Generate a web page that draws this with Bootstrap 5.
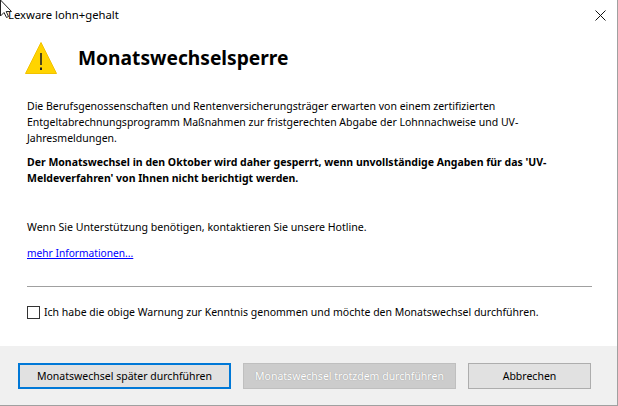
<!DOCTYPE html>
<html lang="de">
<head>
  <meta charset="UTF-8">
  <title>Lexware lohn+gehalt</title>
  <link href="https://cdn.jsdelivr.net/npm/bootstrap@5.3.0/dist/css/bootstrap.min.css" rel="stylesheet">
  <style>
    html, body { height: 100%; }
    body {
      margin: 0;
      background: #fff;
      color: #000;
      font-family: "Noto Sans", "Open Sans", sans-serif;
      font-size: 10.5px;
      line-height: 16px;
    }
    .dlg-window {
      width: 618px;
      height: 406px;
      border-right: 1px solid #a0a0a0;
      border-bottom: 1px solid #a0a0a0;
      position: relative;
      overflow: hidden;
    }
    .dlg-cursor { position: absolute; left: 0; top: 0; }
    .dlg-title { height: 30px; padding-left: 8px; font-size: 11.3px; }
    .dlg-close { width: 15px; height: 15px; margin-right: 9px; }
    .dlg-head { height: 56px; padding-left: 25px; gap: 21px; }
    .dlg-head h1 { font-size: 19.2px; font-weight: 700; margin: 0; line-height: 26px; }
    .dlg-body { padding: 12px 25px 0 27px; flex: 1 1 auto; }
    .dlg-body p { margin: 0; }
    .dlg-body .dlg-intro { height: 48px; }
    .dlg-body .dlg-warn { height: 32px; margin-top: 8px; font-weight: 700; }
    .dlg-body .dlg-hotline { margin-top: 33px; font-size: 10.6px; }
    .dlg-body .dlg-more { margin-top: 10px; font-size: 10.2px; }
    .dlg-more a { color: #0000ff; }
    .dlg-rule { margin: 25px 0 0; border: 0; border-top: 1px solid #a0a0a0; opacity: 1; }
    .dlg-check { margin-top: 17px; gap: 4px; }
    .dlg-box { width: 13px; height: 13px; border: 1px solid #333; background: #fff; }
    .dlg-foot { height: 59px; background: #f0f0f0; padding: 17px 26px 0 18px; gap: 12px; }
    .dlg-btn {
      height: 26px;
      padding: 0;
      background: #e1e1e1;
      border: 1px solid #adadad;
      border-radius: 0;
      color: #000;
      font-size: 10.5px;
      line-height: 1;
    }
    .dlg-btn:disabled { background: #cccccc; border-color: #bfbfbf; color: #fff; opacity: 1; text-shadow: 0 0 1px #8a8a8a; }
    .dlg-btn-main { width: 213px; border: 2px solid #0078d7; }
    .dlg-btn-alt { width: 213px; }
    .dlg-btn-esc { width: 123px; }
  </style>
</head>
<body>
  <div class="dlg-window d-flex flex-column">
    <!-- title bar -->
    <div class="dlg-title d-flex align-items-center justify-content-between">
      <span>Lexware lohn+gehalt</span>
      <svg class="dlg-close" viewBox="0 0 15 15"><path d="M2.5 2.5 L12.5 12.5 M12.5 2.5 L2.5 12.5" stroke="#111" stroke-width="1" fill="none"/></svg>
    </div>

    <!-- heading -->
    <div class="dlg-head d-flex align-items-center">
      <svg width="32" height="32" viewBox="0 0 32 32">
        <path d="M16 .5 L31.5 31.5 L.5 31.5 Z" fill="#ffd400" stroke="#f2c200" stroke-width="1"/>
        <path d="M16 11 V23" stroke="#222" stroke-width="1.6"/>
        <rect x="15" y="25.5" width="2" height="2.5" fill="#222"/>
      </svg>
      <h1>Monatswechselsperre</h1>
    </div>

    <!-- text -->
    <div class="dlg-body">
      <p class="dlg-intro">Die Berufsgenossenschaften und Rentenversicherungsträger erwarten von einem zertifizierten<br>Entgeltabrechnungsprogramm Maßnahmen zur fristgerechten Abgabe der Lohnnachweise und UV-<br>Jahresmeldungen.</p>
      <p class="dlg-warn">Der Monatswechsel in den Oktober wird daher gesperrt, wenn unvollständige Angaben für das 'UV-<br>Meldeverfahren' von Ihnen nicht berichtigt werden.</p>
      <p class="dlg-hotline">Wenn Sie Unterstützung benötigen, kontaktieren Sie unsere Hotline.</p>
      <p class="dlg-more"><a href="#">mehr Informationen...</a></p>
      <hr class="dlg-rule">
      <div class="dlg-check d-flex align-items-center">
        <span class="dlg-box flex-shrink-0"></span>
        <span>Ich habe die obige Warnung zur Kenntnis genommen und möchte den Monatswechsel durchführen.</span>
      </div>
    </div>

    <!-- buttons -->
    <div class="dlg-foot d-flex align-items-start">
      <button type="button" class="btn dlg-btn dlg-btn-main">Monatswechsel später durchführen</button>
      <button type="button" class="btn dlg-btn dlg-btn-alt" disabled>Monatswechsel trotzdem durchführen</button>
      <button type="button" class="btn dlg-btn dlg-btn-esc">Abbrechen</button>
    </div>

    <!-- mouse pointer caught by the screenshot -->
    <svg class="dlg-cursor" width="13" height="18" viewBox="0 0 13 18"><path d="M.5 0 V16 L4 12.5 L6.5 17.5 L8.5 16.5 L6.2 11.5 L11.5 11.5 Z" fill="#fff" stroke="#222" stroke-width="1"/></svg>
  </div>
  <script src="https://cdn.jsdelivr.net/npm/bootstrap@5.3.0/dist/js/bootstrap.bundle.min.js"></script>
</body>
</html>
